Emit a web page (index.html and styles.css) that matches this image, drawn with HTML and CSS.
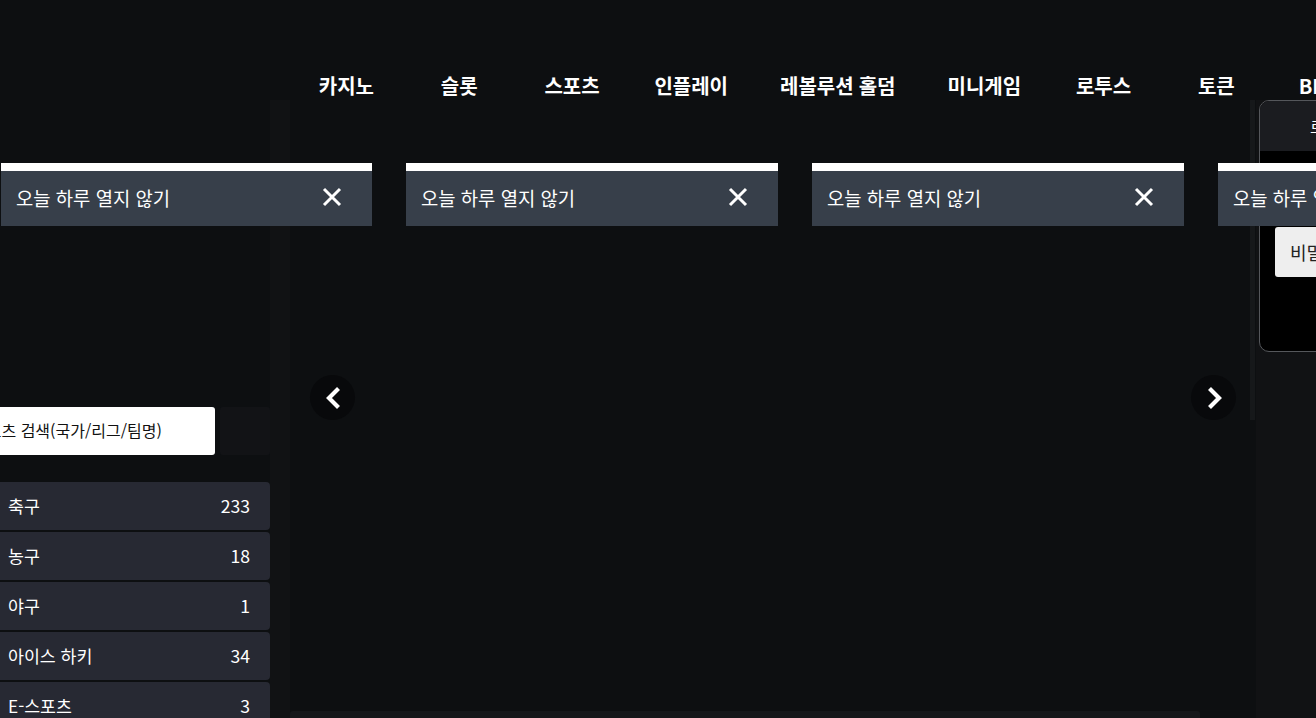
FILE: index.html
```html
<!DOCTYPE html>
<html lang="ko">

<head>
    <meta charset="UTF-8">
    <meta name="viewport" content="width=device-width, initial-scale=1.0">
    <title>카지노</title>
    <link rel="stylesheet" href="styles.css">
</head>

<body>
    <div class="page">
        <header class="top">
            <nav class="nav">
                <a class="nav-item">카지노</a>
                <a class="nav-item">슬롯</a>
                <a class="nav-item">스포츠</a>
                <a class="nav-item">인플레이</a>
                <a class="nav-item">레볼루션 홀덤</a>
                <a class="nav-item">미니게임</a>
                <a class="nav-item">로투스</a>
                <a class="nav-item">토큰</a>
                <a class="nav-item">BET365</a>
            </nav>
        </header>

        <div class="content">
            <aside class="side">
                <div class="side-inner">
                    <div class="search-row">
                        <div class="search-box">스포츠 검색(국가/리그/팀명)</div>
                        <div class="search-btn"></div>
                    </div>
                    <ul class="sport-list">
                        <li class="sport-row"><span>축구</span><span class="sport-count">233</span></li>
                        <li class="sport-row"><span>농구</span><span class="sport-count">18</span></li>
                        <li class="sport-row"><span>야구</span><span class="sport-count">1</span></li>
                        <li class="sport-row"><span>아이스 하키</span><span class="sport-count">34</span></li>
                        <li class="sport-row"><span>E-스포츠</span><span class="sport-count">3</span></li>
                    </ul>
                </div>
            </aside>

            <div class="strip"></div>

            <main class="main">
                <button class="arrow arrow-left">
                    <svg width="16" height="24" viewBox="0 0 16 24"><path d="M13.500 2.500 4 12l9.500 9.500" fill="none" stroke="#fff" stroke-width="4.200" stroke-linejoin="miter"/></svg>
                </button>
                <button class="arrow arrow-right">
                    <svg width="16" height="24" viewBox="0 0 16 24"><path d="M3.500 2.500 13 12l-9.500 9.500" fill="none" stroke="#fff" stroke-width="4.200" stroke-linejoin="miter"/></svg>
                </button>
                <div class="scroll-bar"></div>
            </main>

            <div class="right">
                <div class="right-strip"></div>
                <section class="login">
                    <div class="login-head">로그인</div>
                    <div class="login-body">
                        <div class="login-input">비밀번호</div>
                    </div>
                </section>
            </div>
        </div>

        <div class="popups">
            <div class="popup">
                <div class="popup-top"></div>
                <div class="popup-foot">
                    <span>오늘 하루 열지 않기</span>
                    <svg width="20" height="20" viewBox="0 0 20 20"><path d="M2 2l16 16M18 2 2 18" stroke="#fff" stroke-width="3"/></svg>
                </div>
            </div>
            <div class="popup">
                <div class="popup-top"></div>
                <div class="popup-foot">
                    <span>오늘 하루 열지 않기</span>
                    <svg width="20" height="20" viewBox="0 0 20 20"><path d="M2 2l16 16M18 2 2 18" stroke="#fff" stroke-width="3"/></svg>
                </div>
            </div>
            <div class="popup">
                <div class="popup-top"></div>
                <div class="popup-foot">
                    <span>오늘 하루 열지 않기</span>
                    <svg width="20" height="20" viewBox="0 0 20 20"><path d="M2 2l16 16M18 2 2 18" stroke="#fff" stroke-width="3"/></svg>
                </div>
            </div>
            <div class="popup">
                <div class="popup-top"></div>
                <div class="popup-foot">
                    <span>오늘 하루 열지 않기</span>
                    <svg width="20" height="20" viewBox="0 0 20 20"><path d="M2 2l16 16M18 2 2 18" stroke="#fff" stroke-width="3"/></svg>
                </div>
            </div>
        </div>
    </div>
</body>

</html>
```

FILE: styles.css
```css
html {
    box-sizing: border-box;
    font-family: "Noto Sans CJK KR", "Noto Sans", sans-serif;
    font-size: 16px;
}

*,
*:before,
*:after {
    box-sizing: inherit;
}

body {
    margin: 0;
    background-color: #0d0f11;
    color: #fff;
}

.page {
    position: relative;
    display: flex;
    flex-direction: column;
    width: 1316px;
    height: 718px;
    overflow: hidden;
}

/******* Menu ********/
.top {
    height: 100px;
    flex-shrink: 0;
}

.nav {
    display: flex;
    align-items: center;
    height: 100px;
    padding-top: 72px;
    padding-left: 290px;
}

.nav-item {
    flex-shrink: 0;
    min-width: 112.800px;
    padding: 0 26px;
    font-size: 20px;
    font-weight: 700;
    line-height: 28px;
    text-align: center;
    word-spacing: -0.500px;
}

/******* Columnas ********/
.content {
    display: flex;
    flex: 1;
    min-height: 0;
}

.side {
    width: 270px;
    flex-shrink: 0;
    overflow: hidden;
}

.side-inner {
    margin-left: -60px;
    padding-top: 307px;
}

.search-row {
    display: flex;
    gap: 5px;
}

.search-box {
    flex: 1;
    height: 48px;
    padding-left: 32px;
    border-radius: 3px;
    background-color: #fff;
    color: #111;
    font-size: 16px;
    line-height: 46px;
}

.search-btn {
    width: 50px;
    height: 48px;
    border-radius: 3px;
    background-color: #121316;
}

.sport-list {
    display: flex;
    flex-direction: column;
    gap: 2px;
    margin: 27px 0 0;
    padding: 0;
    list-style: none;
}

.sport-row {
    display: flex;
    align-items: center;
    justify-content: space-between;
    height: 48px;
    padding: 0 20px 2px 68px;
    border-radius: 4px;
    background-color: #272933;
    font-size: 17.300px;
}

.sport-count {
    font-size: 17.600px;
}

.strip {
    width: 20px;
    flex-shrink: 0;
    background-color: #111214;
}

.main {
    position: relative;
    display: flex;
    flex-direction: column;
    justify-content: flex-end;
    width: 966px;
    flex-shrink: 0;
}

.scroll-bar {
    width: 910px;
    height: 7px;
    border-radius: 3px 3px 0 0;
    background-color: #15171a;
}

.arrow {
    position: absolute;
    top: 275px;
    display: flex;
    align-items: center;
    justify-content: center;
    width: 45px;
    height: 45px;
    padding: 0;
    border: 0;
    border-radius: 50%;
    background-color: #08090b;
}

.arrow-left {
    left: 20px;
}

.arrow-right {
    right: 20px;
}

.right {
    position: relative;
    flex: 1;
    padding-left: 3px;
    background-color: #111214;
}

.right-strip {
    position: absolute;
    top: 0;
    left: -6px;
    width: 5px;
    height: 320px;
    background-color: #16181a;
}

/******* Login ********/
.login {
    width: 300px;
    height: 252px;
    border: 1px solid #55575b;
    border-radius: 10px;
    overflow: hidden;
    background-color: #000;
}

.login-head {
    height: 50px;
    padding-left: 50px;
    background-color: #1b1c20;
    font-size: 16px;
    line-height: 50px;
}

.login-body {
    padding: 76px 15px 0;
}

.login-input {
    height: 50px;
    padding-left: 15px;
    border-radius: 3px;
    background-color: #eee;
    color: #222;
    font-size: 18px;
    line-height: 50px;
}

/******* Popups ********/
.popups {
    position: absolute;
    top: 163px;
    left: 0;
    display: flex;
    gap: 34px;
}

.popup {
    width: 372px;
    flex-shrink: 0;
}

.popup:first-child {
    width: 371px;
    margin-left: 1px;
}

.popup-top {
    height: 8px;
    background-color: #fff;
}

.popup-foot {
    display: flex;
    align-items: center;
    justify-content: space-between;
    height: 55px;
    padding: 0 30px 2px 15px;
    background-color: #373f4a;
    font-size: 18.800px;
}

.popup-foot svg {
    margin-bottom: 1px;
}
```
